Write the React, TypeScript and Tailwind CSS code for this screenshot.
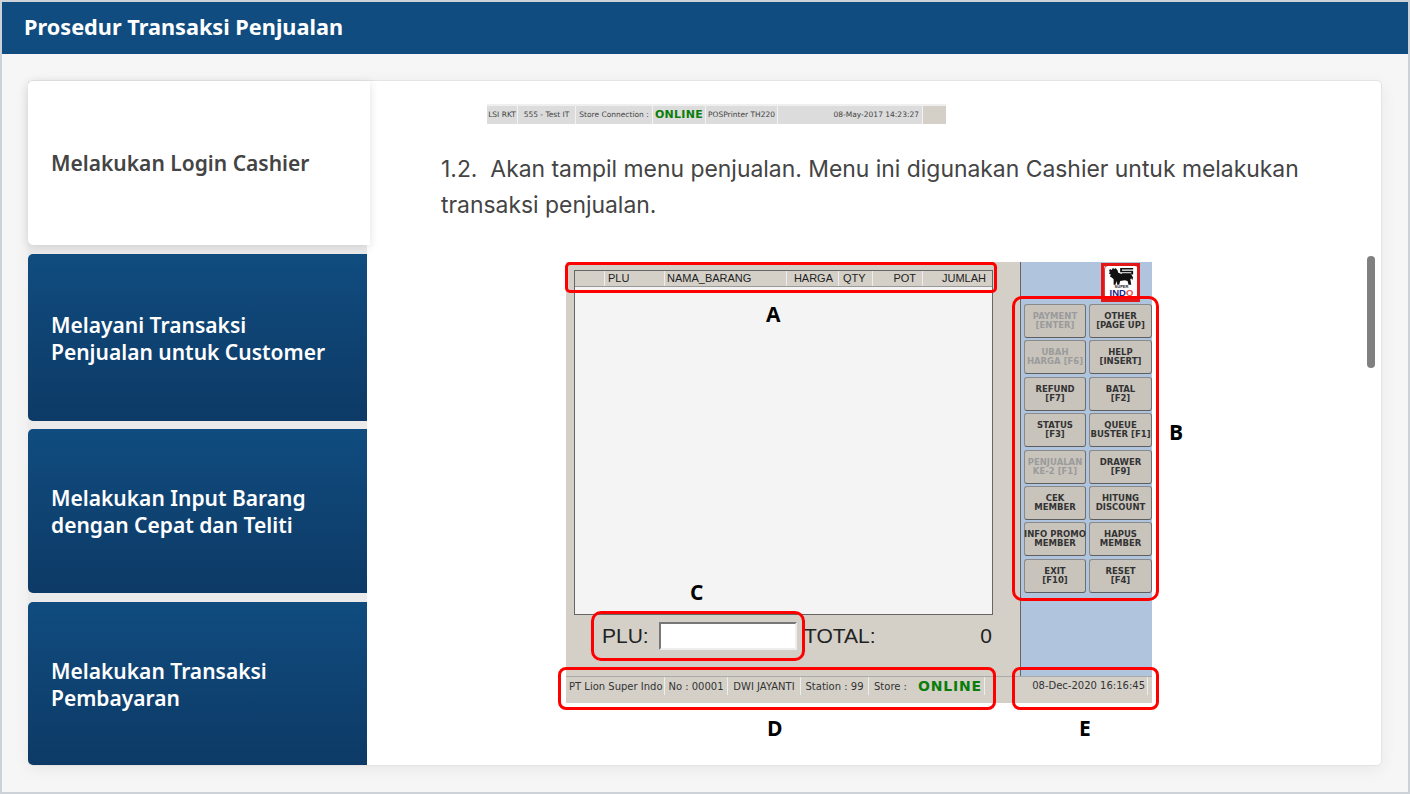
const tabs = [
  { lines: ["Melayani Transaksi", "Penjualan untuk Customer"], height: "h-[167px]" },
  { lines: ["Melakukan Input Barang", "dengan Cepat dan Teliti"], height: "h-[164px]" },
  { lines: ["Melakukan Transaksi", "Pembayaran"], height: "h-[163px]" },
];

const buttons = [
  ["PAYMENT", "[ENTER]", true],
  ["OTHER", "[PAGE UP]"],
  ["UBAH", "HARGA [F6]", true],
  ["HELP", "[INSERT]"],
  ["REFUND", "[F7]"],
  ["BATAL", "[F2]"],
  ["STATUS", "[F3]"],
  ["QUEUE", "BUSTER [F1]"],
  ["PENJUALAN", "KE-2 [F1]", true],
  ["DRAWER", "[F9]"],
  ["CEK", "MEMBER"],
  ["HITUNG", "DISCOUNT"],
  ["INFO PROMO", "MEMBER"],
  ["HAPUS", "MEMBER"],
  ["EXIT", "[F10]"],
  ["RESET", "[F4]"],
] as const;

function TopStrip() {
  return (
    <div className="ml-[46px] flex h-[20px] w-[459px] items-center border-t-2 border-[#efefef] bg-[#dcdcdc] font-['DejaVu_Sans'] text-[7.5px] text-[#444]">
      <span className="flex h-full w-[31px] items-center justify-center border-r border-[#f2f2f2]">LSI RKT</span>
      <span className="flex h-full w-[58px] items-center justify-center border-r border-[#f2f2f2]">555 - Test IT</span>
      <span className="flex h-full w-[77px] items-center justify-center border-r border-[#f2f2f2]">Store Connection :</span>
      <span className="flex h-full w-[53px] items-center justify-center border-r border-[#f2f2f2] text-[11px] font-bold tracking-[0.3px] text-[#0a7d0a]">ONLINE</span>
      <span className="flex h-full w-[72px] items-center justify-center border-r border-[#f2f2f2]">POSPrinter TH220</span>
      <span className="flex h-full w-[145px] items-center justify-end border-r border-[#f2f2f2] pr-[3px]">08-May-2017 14:23:27</span>
      <span className="h-full flex-1 bg-[#d4d0c8]" />
    </div>
  );
}

function SuperIndoLogo() {
  return (
    <div className="flex h-[35px] w-[35px] flex-col items-center rounded-[4px] border-[1.5px] border-[#e23a3a] bg-white pt-[1px]">
      <svg viewBox="0 0 28 19" className="h-[18px] w-[26px]">
        {/* lion */}
        <path
          d="M1 2l2 1 1-2 2 1 1-1 2 2 1 3 3 1h9l2 1 2 3-1 3-1-2-1 1 1 6h-3l-1-4-3-1-5 1-1 4h-3l1 0-1-4-1 4H5l0-6-2-2-2-1 1-2-2-1 1-2-1-1z"
          fill="#111"
        />
        {/* stripes */}
        <path d="M12 1h14v1.6H14v1.2h12V8H14V6.600h10V5.400H12z" fill="#111" />
      </svg>
      <span className="font-['Liberation_Sans'] text-[4px] leading-[4px] font-bold text-[#223]">SUPER</span>
      <span className="font-['Liberation_Sans'] text-[9.5px] leading-[8px] font-bold text-[#1b1f8a]">
        IND<span className="text-[#e8504a]">O</span>
      </span>
    </div>
  );
}

function PosScreen() {
  return (
    <div className="relative mt-[39px] ml-[125px] flex h-[441px] w-[586px] flex-col bg-[#d4d0c8] font-['Liberation_Sans'] text-[#222]">
      <div className="flex h-[414px]">
        <div className="w-[454px] pt-[8px] pl-[8px]">
          <div className="h-[345px] w-[419px] border border-[#666] bg-[#f4f4f4]">
            <div className="flex h-[16px] border-b border-[#999] bg-[#d4d0c8] text-[11px] leading-[15px]">
              <span className="w-[30px] border-r border-[#eee]" />
              <span className="w-[60px] border-r border-[#eee] pl-[3px]">PLU</span>
              <span className="w-[122px] border-r border-[#eee] pl-[2px]">NAMA_BARANG</span>
              <span className="w-[52px] border-r border-[#eee] pr-[5px] text-right">HARGA</span>
              <span className="w-[34px] border-r border-[#eee] pl-[4px]">QTY</span>
              <span className="w-[50px] border-r border-[#eee] pr-[6px] text-right">POT</span>
              <span className="flex-1 pr-[6px] text-right">JUMLAH</span>
            </div>
          </div>
          <div className="mt-[7px] flex h-[28px] w-[420px] items-center pr-[2px] pl-[28px] text-[21px]">
            <span className="w-[57px]">PLU:</span>
            <span className="h-[28px] w-[138px] border-2 border-t-[#777] border-r-[#eee] border-b-[#eee] border-l-[#777] bg-white" />
            <span className="ml-[7px] flex-1">TOTAL:</span>
            <span>0</span>
          </div>
        </div>
        <div className="flex w-[132px] flex-col border-t-0 border-l border-[#666] bg-[#b0c4de] pl-[3px]">
          <div className="flex h-[42px] justify-end pt-[3px] pr-[13px]">
            <SuperIndoLogo />
          </div>
          <div className="grid w-[128px] grid-cols-[62px_63px] gap-x-[3px] gap-y-[2.4px]">
            {buttons.map(([top, bottom, disabled]) => (
              <div
                key={top + bottom}
                className={`flex h-[34px] flex-col items-center justify-center rounded-[3px] border border-t-[#8a8a8a] border-r-[#6e6e6e] border-b-[#5e5e5e] border-l-[#8a8a8a] bg-[#c8c4bc] font-['DejaVu_Sans'] text-[8.5px] leading-[9px] font-bold whitespace-nowrap ${
                  disabled ? "text-[#9b9b9b]" : "text-[#333]"
                }`}
              >
                <span>{top}</span>
                <span>{bottom}</span>
              </div>
            ))}
          </div>
        </div>
      </div>
      <div className="flex h-[27px] border-t border-[#aaa] font-['DejaVu_Sans'] text-[10px] text-[#333]">
        <div className="flex h-[18px] items-center">
          <span className="flex h-full w-[99px] items-center border-r border-[#eee] pl-[3px] whitespace-nowrap">PT Lion Super Indo</span>
          <span className="flex h-full w-[63px] items-center justify-center border-r border-[#eee] whitespace-nowrap">No : 00001</span>
          <span className="flex h-full w-[73px] items-center justify-center border-r border-[#eee] whitespace-nowrap">DWI JAYANTI</span>
          <span className="flex h-full w-[68px] items-center justify-center border-r border-[#eee] whitespace-nowrap">Station : 99</span>
          <span className="flex h-full w-[116px] items-center border-r border-[#eee] pl-[5px] whitespace-nowrap">
            Store :
            <span className="ml-[11px] text-[14px] leading-[14px] font-bold tracking-[0.8px] text-[#0a7d0a]">ONLINE</span>
          </span>
        </div>
        <span className="ml-auto h-[18px] w-[136px] border-r border-[#eee] pr-[2px] text-right leading-[18px] whitespace-nowrap">
          08-Dec-2020 16:16:45
        </span>
        <span className="w-[4px]" />
      </div>

      {/* annotations */}
      <div className="absolute top-0 left-[-1px] h-[31px] w-[432px] rounded-[5px] border-[3px] border-[#f00]" />
      <div className="absolute top-[1px] left-[535px] h-[39px] w-[39px] border-[3px] border-[#e01818]" />
      <div className="absolute top-[34px] left-[446px] h-[305px] w-[147px] rounded-[10px] border-[3px] border-[#f00]" />
      <div className="absolute top-[349px] left-[25px] h-[50px] w-[214px] rounded-[10px] border-[3px] border-[#f00]" />
      <div className="absolute top-[405px] left-[-8px] h-[43px] w-[438px] rounded-[8px] border-[3px] border-[#f00]" />
      <div className="absolute top-[405px] left-[446px] h-[43px] w-[147px] rounded-[8px] border-[3px] border-[#f00]" />
      <Label text="A" className="top-[38px] left-[200px]" />
      <Label text="B" className="top-[156px] left-[603px]" />
      <Label text="C" className="top-[316px] left-[124px]" />
      <Label text="D" className="top-[452px] left-[201px]" />
      <Label text="E" className="top-[452px] left-[513px]" />
    </div>
  );
}

function Label({ text, className }: { text: string; className: string }) {
  return (
    <span className={`absolute font-['Open_Sans'] text-[21px] leading-[28px] font-bold text-black ${className}`}>
      {text}
    </span>
  );
}

export default function App() {
  return (
    <div className="flex h-[794px] w-[1410px] flex-col overflow-hidden border-2 border-[#ccd2d8] bg-[#f6f6f6] font-['Noto_Sans',sans-serif]">
      <header className="flex h-[52px] shrink-0 items-center bg-[#104c7f] pb-[2px] pl-[22px] text-[21.7px] font-bold text-white">
        Prosedur Transaksi Penjualan
      </header>
      <main className="flex-1 px-[26px] pt-[26px]">
        <div className="relative flex h-[686px] rounded-[5px] border border-[#e4e4e4] bg-white shadow-[0_4px_16px_rgba(0,0,0,0.06)]">
          <aside className="-ml-[1px] flex w-[339px] shrink-0 flex-col bg-[#ebebeb]">
            <div className="z-10 flex h-[164px] w-[342px] items-center rounded-l-[5px] bg-white pt-[2px] pl-[23px] text-[21px] font-semibold text-[#444] shadow-[0_2px_10px_rgba(0,0,0,0.12)]">
              Melakukan Login Cashier
            </div>
            {tabs.map(({ lines, height }, i) => (
              <div
                key={lines[0]}
                className={`flex ${height} ${i === 1 ? "mt-[8px]" : "mt-[9px]"} flex-col justify-center rounded-l-[5px] bg-gradient-to-b from-[#104c7f] to-[#0d3a66] pt-[2px] pl-[23px] text-[21px] leading-[27px] font-semibold text-white`}
              >
                {lines.map((line) => (
                  <span key={line}>{line}</span>
                ))}
              </div>
            ))}
          </aside>
          <section className="min-w-0 flex-1 overflow-hidden pt-[23px] pl-[74px]">
            <TopStrip />
            <p className="mt-[27px] w-[900px] font-['Inter',sans-serif] text-[22.9px] leading-[36px] text-[#444]">
              1.2.&nbsp; Akan tampil menu penjualan. Menu ini digunakan Cashier untuk melakukan
              <br />
              transaksi penjualan.
            </p>
            <PosScreen />
          </section>
          <div className="absolute top-[175px] right-[6px] h-[112px] w-[8px] rounded-full bg-[#808080]" />
        </div>
      </main>
    </div>
  );
}
